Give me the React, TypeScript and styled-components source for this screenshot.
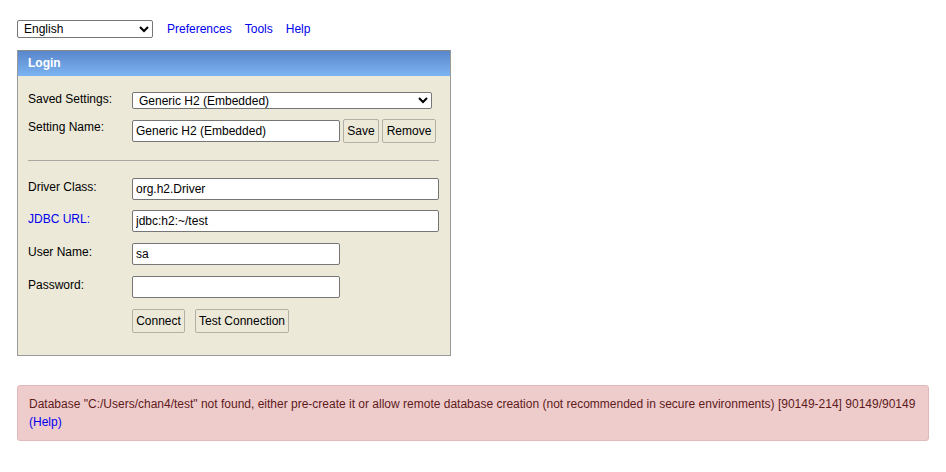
import styled, { createGlobalStyle } from 'styled-components'

const GlobalStyle = createGlobalStyle`
  html, body {
    margin: 0;
    padding: 0;
    background: #fff;
  }
  body {
    font-family: 'Liberation Sans', Arial, sans-serif;
    font-size: 12px;
    color: #000;
  }
`

const Page = styled.div`
  padding: 20px 17px 0 17px;
`

const TopBar = styled.div`
  display: flex;
  align-items: center;
  height: 18px;
`

const LangSelect = styled.select`
  width: 136px;
  height: 18px;
  font-family: 'Liberation Sans', Arial, sans-serif;
  font-size: 12px;
  border: 1px solid #767676;
  border-radius: 2px;
  background: #fff;
  padding: 0 0 0 2px;
  margin: 0 14px 0 0;
`

const NavLink = styled.a`
  color: #0000ee;
  text-decoration: none;
  font-size: 12px;
  margin-right: 13px;
`

const Panel = styled.div`
  margin-top: 12px;
  width: 432px;
  border: 1px solid #999;
  border-top-color: #8a8a8a;
  background: #ece9d8;
  padding-bottom: 22px;
`

const PanelHeader = styled.div`
  height: 25px;
  line-height: 24px;
  padding-left: 10px;
  color: #fff;
  font-weight: bold;
  font-size: 12px;
  background: linear-gradient(to bottom, #5886cb, #7db4f1);
`

const PanelBody = styled.div`
  padding: 16px 11px 0 10px;
`

const Row = styled.div<{ $mt?: number }>`
  display: flex;
  align-items: flex-start;
  margin-top: ${(p) => p.$mt ?? 0}px;
`

const Label = styled.div<{ $link?: boolean; $pt?: number }>`
  width: 104px;
  flex: none;
  padding-top: ${(p) => p.$pt ?? 2}px;
  color: ${(p) => (p.$link ? '#0000ee' : '#000')};
`

const Field = styled.div`
  display: flex;
  align-items: center;
  gap: 3px;
`

const TextInput = styled.input<{ $w: number }>`
  box-sizing: border-box;
  width: ${(p) => p.$w}px;
  height: 22px;
  border: 1px solid #767676;
  border-radius: 2px;
  background: #fff;
  padding: 1px 3px;
  font-family: 'Liberation Sans', Arial, sans-serif;
  font-size: 12px;
  color: #000;
  margin: 0;
`

const Select = styled.select<{ $w: number }>`
  box-sizing: border-box;
  width: ${(p) => p.$w}px;
  height: 17px;
  border: 1px solid #767676;
  border-radius: 2px;
  background: #fff;
  padding: 0 0 0 2px;
  font-family: 'Liberation Sans', Arial, sans-serif;
  font-size: 12px;
  color: #000;
  margin: 0;
`

const Button = styled.button<{ $w: number; $ml?: number }>`
  box-sizing: border-box;
  width: ${(p) => p.$w}px;
  height: 24px;
  margin: 0 0 0 ${(p) => p.$ml ?? 0}px;
  padding: 0;
  border: 1px solid #b2b0a6;
  border-radius: 2px;
  background: #ece9d8;
  font-family: 'Liberation Sans', Arial, sans-serif;
  font-size: 12px;
  color: #000;
`

const Rule = styled.div`
  margin: 17px 0 17px 0;
  height: 1px;
  background: #a8a8a0;
`

const ErrorBox = styled.div`
  margin-top: 29px;
  width: 912px;
  box-sizing: border-box;
  border: 1px solid #e3b8bb;
  border-radius: 3px;
  background: #efcccc;
  padding: 9px 11px 9px 11px;
  line-height: 18px;
  color: #5e1b1b;
  font-size: 12px;
`

const HelpLink = styled.a`
  color: #0000ee;
  text-decoration: none;
`

export default function App() {
  return (
    <>
      <GlobalStyle />
      <Page>
        <TopBar>
          <LangSelect defaultValue="en">
            <option value="en">English</option>
          </LangSelect>
          <NavLink href="#">Preferences</NavLink>
          <NavLink href="#">Tools</NavLink>
          <NavLink href="#">Help</NavLink>
        </TopBar>
        <Panel>
          <PanelHeader>Login</PanelHeader>
          <PanelBody>
            <Row>
              <Label $pt={0}>Saved Settings:</Label>
              <Select $w={300} defaultValue="h2">
                <option value="h2">Generic H2 (Embedded)</option>
              </Select>
            </Row>
            <Row $mt={10}>
              <Label $pt={1}>Setting Name:</Label>
              <Field>
                <TextInput $w={208} defaultValue="Generic H2 (Embedded)" />
                <Button $w={36}>Save</Button>
                <Button $w={54}>Remove</Button>
              </Field>
            </Row>
            <Rule />
            <Row>
              <Label>Driver Class:</Label>
              <TextInput $w={308} defaultValue="org.h2.Driver" />
            </Row>
            <Row $mt={10}>
              <Label $link>JDBC URL:</Label>
              <TextInput $w={308} defaultValue="jdbc:h2:~/test" />
            </Row>
            <Row $mt={11}>
              <Label>User Name:</Label>
              <TextInput $w={208} defaultValue="sa" />
            </Row>
            <Row $mt={11}>
              <Label>Password:</Label>
              <TextInput $w={208} type="password" defaultValue="" />
            </Row>
            <Row $mt={11}>
              <Label />
              <Button $w={53}>Connect</Button>
              <Button $w={94} $ml={10}>Test Connection</Button>
            </Row>
          </PanelBody>
        </Panel>
        <ErrorBox>
          Database "C:/Users/chan4/test" not found, either pre-create it or allow remote database creation
          (not recommended in secure environments) [90149-214] 90149/90149
          <br />
          <HelpLink href="#">(Help)</HelpLink>
        </ErrorBox>
      </Page>
    </>
  )
}
